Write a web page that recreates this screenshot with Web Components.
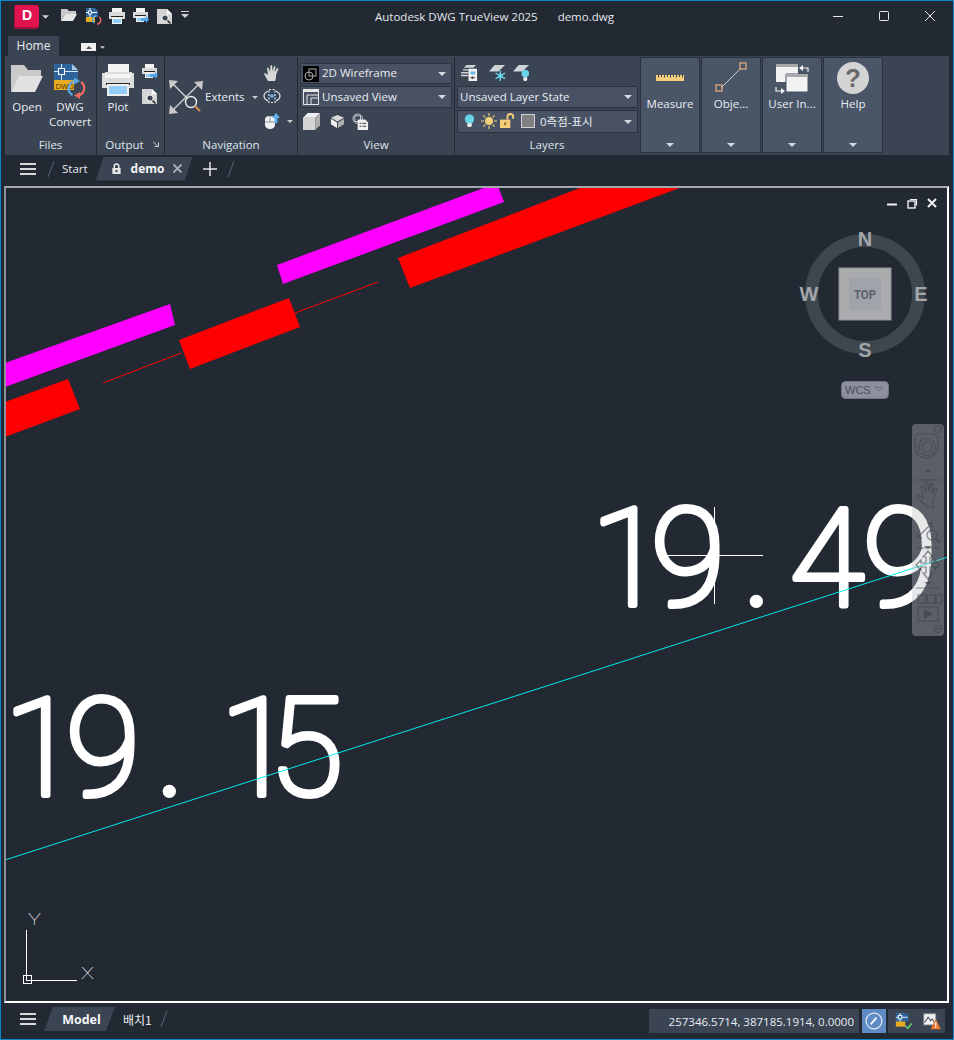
<!DOCTYPE html>
<html lang="en"><head><meta charset="utf-8"><title>Autodesk DWG TrueView 2025</title>
<style>
html,body{margin:0;padding:0;background:#222933}
body{font-family:"Open Sans","Noto Sans CJK KR",sans-serif;font-size:11.5px;color:#e8edf2}
</style></head><body>
<app-window>
  <title-bar></title-bar>
  <ribbon-tabs></ribbon-tabs>
  <ribbon-bar></ribbon-bar>
  <doc-tabs></doc-tabs>
  <cad-viewport></cad-viewport>
  <status-bar></status-bar>
</app-window>
<script>
const FONT='"Open Sans","Noto Sans CJK KR",sans-serif';
const ICONS={
folder:[32,`<path fill="#c9c9c9" d="M0 1h13l4 5h13v6H9L0 28z"/><path fill="#e2e2e2" d="M8 12h24l-8 16H0z"/>`],
folderS:[16,`<path fill="#c9c9c9" d="M0 1h6l2 2h7v3H4L0 13z"/><path fill="#e6e6e6" d="M4 6h12l-4 7H0z"/>`],
dwg:[32,`<path fill="#2f639c" d="M0 0h18l6 6v13H0z"/><path fill="#a9c8e6" d="M18 0l6 6h-6z"/><path fill="#e9ab22" d="M0 16h20v10H0z"/><path stroke="#dbe8f4" fill="none" d="M7.500 0v16M0 7.500h24"/><rect x="4.500" y="4.500" width="6" height="6" fill="#2f639c" stroke="#fff"/><text x="1.500" y="24.500" font-family="Liberation Sans" font-size="7.500" fill="#4a3500">DWG</text><path fill="none" stroke="#5aa9e6" stroke-width="2.200" d="M18.500 31a7.500 7.500 0 0 1 3-14"/><path fill="#5aa9e6" d="M20 13.500l6 3.500-6 3.500z"/><path fill="none" stroke="#ef6b62" stroke-width="2.200" d="M27 18a7.500 7.500 0 0 1-3 13.500"/><path fill="#ef6b62" d="M26 35l-6-3.500 6-3.500z"/>`],
dwgS:[16,`<path fill="#2f639c" d="M1 0h9l3 3v6H1z"/><path fill="#e9ab22" d="M1 9h9v5H1z"/><path stroke="#fff" fill="none" d="M5 0v9M1 4.500h11"/><rect x="3.500" y="3" width="3" height="3" fill="#2f639c" stroke="#fff" stroke-width=".8"/><path fill="none" stroke="#5aa9e6" stroke-width="1.300" d="M9.500 15a3.800 3.800 0 0 1 2-7"/><path fill="none" stroke="#ef6b62" stroke-width="1.300" d="M14 9a3.800 3.800 0 0 1-2 7"/>`],
plot:[32,`<path fill="#f4f4f4" d="M6 0h21v10H6z"/><path fill="#dcdcdc" d="M0 9h3v-1h27v1h2v15H0z"/><path fill="#f4f4f4" d="M3 10h26v4H3z"/><path fill="#24292f" d="M4 19h24v2H4z"/><path fill="#eee" d="M5 20h22v12H5z"/><path fill="#93ccf6" d="M7 22h18v8H7z"/>`],
plotS:[16,`<path fill="#f2f2f2" d="M3 0h10v4H3z"/><path fill="#d9d9d9" d="M0 4h16v7H0z"/><path fill="#222" d="M2 8h12v1H2z"/><path fill="#f0f0f0" d="M3 9h10v7H3z"/><path fill="#93ccf6" d="M4 11h8v4H4z"/>`],
plotBatch:[16,`<path fill="#f2f2f2" d="M3 0h9v4H3z"/><path fill="#d9d9d9" d="M0 4h15v6H0z"/><path fill="#222" d="M2 7h11v1H2z"/><path fill="#eee" d="M3 8h8v6H3z"/><path fill="#93ccf6" d="M4 10h5v3H4z"/><path fill="#4fa6ea" d="M8 10h5V8l3 3.500-3 3.500v-2H8z"/>`],
preview:[16,`<path fill="#d3d3d3" d="M0 1h10l5 5v10H0z"/><path fill="#fff" d="M10 1l5 5h-5z"/><circle cx="8" cy="10" r="3.200" fill="#3a4250" stroke="#f2f2f2" stroke-width="1.200"/><path stroke="#222" stroke-width="1.500" d="M10.500 12.500l3 3"/>`],
extents:[34,`<g fill="none" stroke="#d6d6d6" stroke-width="1.300"><path d="M4 4l24 24M4 30L30 4"/></g><g fill="#c9c9c9"><path d="M0 0l9 1-8 8zM34 1l-1 9-8-8zM0 34l1-9 8 8z"/></g><circle cx="22" cy="22" r="5.500" fill="#3b4453" stroke="#eee" stroke-width="1.400"/><path stroke="#c98a4d" stroke-width="2.200" d="M26 26l5 5"/>`],
hand:[16,`<path fill="#d8d8d8" d="M4 16 0 9l1-1 3 2L3 3l1.500-.5L6 7l.5-6.500L8 0l.8 6.500L10 1l1.500.5L10.500 7.500 13 3l1.500.8L12 10v3l-1 3z"/>`],
orbit:[16,`<path fill="none" stroke="#dfe6ee" stroke-width="1.200" d="M4 3C2 4 0 6 0 8s2 4 4 5M12 3c2 1 4 3 4 5s-2 4-4 5"/><path fill="none" stroke="#dfe6ee" stroke-width="1.200" stroke-dasharray="2 1.500" d="M5 1.500h6v13H5z"/><path d="M6 8h4M8 6v4" stroke="#71b9f2" stroke-width="1.300"/>`],
mouse:[16,`<path fill="#f1f1f1" d="M1 6c0-2 2-3 5-3s5 1 5 3v6c0 2-2 4-5 4s-5-2-5-4z"/><path stroke="#8b94a2" d="M1 9h10M6 3v6"/><path fill="#5eb2f2" d="M12 0l4 5h-2.500v5h-3V5H8z"/>`],
wire:[16,`<rect width="16" height="16" fill="#000"/><circle cx="6" cy="10" r="4" fill="none" stroke="#aaa"/><rect x="6" y="3" width="7" height="7" fill="none" stroke="#aaa"/>`],
views:[16,`<rect x=".5" y=".5" width="15" height="15" fill="none" stroke="#e6e6e6"/><path fill="#e6e6e6" d="M1 1h14v2H1z"/><path fill="none" stroke="#e6e6e6" d="M4 15V6h11M8 15V9h7"/>`],
cube:[18,`<path fill="#d3d3d3" d="M0 5h13v13H0z"/><path fill="#efefef" d="M0 5l5-5h13l-5 5z"/><path fill="#aeaeae" d="M13 5l5-5v13l-5 5z"/>`],
cubeS:[16,`<path fill="#d8d8d8" d="M8 1l7 3-7 4-7-4z"/><path fill="#f2f2f2" d="M1 5l6.500 4v6L1 11z"/><path fill="#b0b0b0" d="M15 5L8.500 9v6l6.500-4z"/>`],
viewMgr:[18,`<circle cx="6" cy="6" r="5" fill="none" stroke="#cfd3d8"/><rect x="3" y="3" width="6" height="6" fill="none" stroke="#cfd3d8"/><path fill="#f1f1f1" d="M6 7h8l3 3v8H6z"/><path d="M8 11h2M11 11h4M8 14h2M11 14h4" stroke="#333"/>`],
layerState:[18,`<path fill="#cfd3d8" d="M6 1h10l-3 3H3zM2 5.500h9V7H2zM0 8.500h8V10H0zM0 11.500h8V13H0z"/><path fill="#f2f2f2" d="M8 5h9v13H8z"/><path fill="#5fb8ea" d="M10 8h5v3h-5z"/><path stroke="#333" d="M10 14.500h5M12 13v3"/>`],
layerFrz:[18,`<path fill="#cfd3d8" d="M6 1h11l-7 7H0z"/><g stroke="#66d4e6" stroke-width="1.400"><path d="M12 7v11M7 9.500l10 6M17 9.500l-10 6"/></g><circle cx="12" cy="12.500" r="2.500" fill="#66d4e6"/>`],
layerOff:[18,`<path fill="#cfd3d8" d="M6 1h11l-7 7H0z"/><circle cx="13" cy="10" r="4" fill="#66d4e6"/><path fill="#f2f2f2" d="M11 14h4v3l-1 1h-2l-1-1z"/>`],
bulb:[14,`<circle cx="7" cy="5.500" r="5" fill="#66d6e8"/><path fill="#eee" d="M4.500 10h5v3l-1.500 1H6l-1.500-1z"/>`],
sun:[16,`<circle cx="8" cy="8" r="4" fill="#f4cf7a"/><g stroke="#f4cf7a" stroke-width="1.200"><path d="M8 0v3M8 13v3M0 8h3M13 8h3M2.300 2.300l2 2M11.700 11.700l2 2M13.700 2.300l-2 2M4.300 11.700l-2 2"/></g>`],
lock:[16,`<path fill="#f6cd7a" d="M0 7h11v9H0z"/><path fill="none" stroke="#f6cd7a" stroke-width="2" d="M8 7V4a3 3 0 0 1 6 0v2"/><rect x="4.500" y="10" width="2" height="3" fill="#8a6a2c"/>`],
swatch:[14,`<rect x=".5" y=".5" width="13" height="13" fill="#808080" stroke="#d0d0d0"/>`],
ruler:[28,`<path fill="#f6cf7a" d="M0 10h28v6H0z"/><path stroke="#3b4453" d="M2.500 10v2.500M5.500 10v2M8.500 10v2.500M11.500 10v2M14.500 10v2.500M17.500 10v2M20.500 10v2.500M23.500 10v2M26.500 10v2.500"/>`],
obj:[32,`<path stroke="#cfd3d8" d="M6 26L26 6"/><rect x="1" y="23" width="6" height="6" fill="none" stroke="#efaf7e" stroke-width="1.200"/><rect x="25" y="1" width="6" height="6" fill="none" stroke="#efaf7e" stroke-width="1.200"/>`],
ui:[32,`<path fill="#f2f2f2" d="M0 2h22v18H0z"/><path fill="#a8a8a8" d="M0 2h22v3H0z"/><path fill="#f2f2f2" d="M10 12h22v18H10z" stroke="#4a5568"/><path fill="#a8a8a8" d="M10 12h22v3H10z"/><g fill="none" stroke="#f2f2f2" stroke-width="1.200"><path d="M25 6h7v4M0 25v4h7"/></g><path fill="#f2f2f2" d="M23 6l4-3v6zM9 29l-4-3v6z"/>`],
help:[32,`<circle cx="16" cy="16" r="16" fill="#d4d4d4"/><text x="16" y="25" text-anchor="middle" font-family="Liberation Sans" font-weight="700" font-size="26" fill="#6a6a6a">?</text>`],
lockS:[12,`<path fill="#e8e8e8" d="M1.500 5.500h9V12h-9z"/><path fill="none" stroke="#e8e8e8" stroke-width="1.600" d="M3.500 5.500V3.500a2.500 2.500 0 0 1 5 0v2"/><rect x="5" y="7.500" width="2" height="2.500" fill="#3b4453"/>`],
gauge:[24,`<circle cx="12" cy="12" r="9.500" fill="#5e8bc3" stroke="#dfe9f5" stroke-width="1.500"/><path stroke="#fff" stroke-width="2" d="M8 16l7-8"/>`],
stDwg:[20,`<path fill="#2f639c" d="M1 0h12l3 3v7H1z"/><path fill="#e9ab22" d="M1 10h11v6H1z"/><path stroke="#fff" fill="none" d="M6 0v10M1 5h14"/><rect x="4" y="3" width="4" height="4" fill="#2f639c" stroke="#fff"/><path fill="none" stroke="#5fc76a" stroke-width="2" d="M12 15l3 3 5-6"/>`],
stWarn:[20,`<rect x="1" y="1" width="14" height="13" fill="#f2f2f2" stroke="#999"/><path fill="none" stroke="#4a5568" stroke-width="1.200" d="M2 11l4-6 3 4 2-2 3 5"/><path fill="#e8752c" d="M15 7l6 12H9z"/><path stroke="#fff" stroke-width="1.500" d="M15 11v4M15 16v1.500"/>`]
};
function icon(name,size,extra=''){const [v,body]=ICONS[name];const s=size||v;return `<svg width="${s}" height="${s}" viewBox="0 0 ${v} ${v}" style="display:block;flex:none;overflow:visible;${extra}" aria-hidden="true">${body}</svg>`;}
const caret=(c='#cfd4da',w=8,h=4)=>`<svg width="${w}" height="${h}" viewBox="0 0 8 4" style="display:block;flex:none" aria-hidden="true"><path fill="${c}" d="M0 0h8L4 4z"/></svg>`;
const burger=`<svg width="16" height="12" viewBox="0 0 16 12" style="display:block;flex:none" aria-hidden="true"><path fill="#d9d9d9" d="M0 0h16v2H0zM0 5h16v2H0zM0 10h16v2H0z"/></svg>`;
const slash=`<svg width="8" height="16" viewBox="0 0 8 16" style="display:block;flex:none" aria-hidden="true"><path stroke="#5a6370" d="M7 0L1 16"/></svg>`;
class Base extends HTMLElement{
  connectedCallback(){ if(this.shadowRoot)return; this.attachShadow({mode:'open'}).innerHTML=this.render(); }
}
const def=(n,r)=>customElements.define(n,class extends Base{render(){return r.call(this)}});

def('app-window',()=>`<style>:host{display:flex;flex-direction:column;box-sizing:border-box;width:954px;height:1040px;border:1px solid #0b87cf;background:#222933;overflow:hidden;font-family:${FONT}}</style><slot></slot>`);

def('title-bar',()=>`<style>
:host{display:flex;align-items:center;height:35px;flex:none;color:#e3e7ec;font-size:11.5px}
.logo{margin-left:14px;width:24px;height:22px;margin-top:-5px;position:relative;background:#e2144f;border-radius:1px 3px 3px 1px;box-shadow:-1px 1px 0 #a80f3c,0 2px 0 #a80f3c;color:#fff;font:700 14px/20px "Liberation Sans";text-align:center}
.q{display:flex;gap:8px;margin-left:12px}
.t{margin-left:186px;white-space:nowrap}
.btn{margin-left:auto;display:flex;gap:36px;padding-right:18px}
</style>
<span class="logo">D</span><span style="margin:-4px 0 0 3px">${caret('#d0d0d0',7,4)}</span>
<div class="q" style="margin-top:-5px">${icon('folderS')}${icon('dwgS')}${icon('plotS')}${icon('plotBatch')}${icon('preview')}<svg width="8" height="10" viewBox="0 0 8 10" aria-hidden="true" style="display:block;margin:3px 0 0 0"><path fill="#d0d0d0" d="M0 0h8v1H0zM0 3h8L4 7z"/></svg></div>
<span class="t" style="margin-top:-5px">Autodesk DWG TrueView 2025<span style="margin-left:20px">demo.dwg</span></span>
<div class="btn" style="margin-top:-5px">
<svg width="10" height="10" viewBox="0 0 10 10" aria-hidden="true"><path stroke="#e6e6e6" d="M0 5.500h10"/></svg>
<svg width="10" height="10" viewBox="0 0 10 10" aria-hidden="true"><rect x=".5" y=".5" width="9" height="9" rx="1" fill="none" stroke="#e6e6e6"/></svg>
<svg width="10" height="10" viewBox="0 0 10 10" aria-hidden="true"><path stroke="#e6e6e6" d="M0 0l10 10M10 0L0 10"/></svg>
</div>`);

def('ribbon-tabs',()=>`<style>
:host{display:flex;height:20px;flex:none;padding-left:7px;align-items:stretch}
.home{width:51px;background:#3b4453;display:flex;align-items:center;justify-content:center;color:#e8edf2;font-size:12px;padding-bottom:1px;box-sizing:border-box}
.mini{margin:7px 0 0 22px;width:15px;height:8px;background:#eee;display:flex;align-items:center;justify-content:center}
.c{margin:10px 0 0 4px}
</style><div class="home">Home</div><div class="mini">${caret('#555',6,3).replace('M0 0h8L4 4z','M0 4h8L4 0z')}</div><div class="c">${caret('#ccc',5,3)}</div>`);

def('ribbon-bar',()=>`<style>
:host{display:flex;height:99px;flex:none;margin-left:4px;width:944px;background:#3b4453;box-sizing:border-box;padding-top:1px}
big-tool{margin-left:1px}
</style>
<ribbon-panel label="Files" w="92"><files-group></files-group></ribbon-panel>
<ribbon-panel label="Output" w="68" launcher><output-group></output-group></ribbon-panel>
<ribbon-panel label="Navigation" w="133"><nav-group></nav-group></ribbon-panel>
<ribbon-panel label="View" w="157"><view-group></view-group></ribbon-panel>
<ribbon-panel label="Layers" w="184" last><layers-group></layers-group></ribbon-panel>
<big-tool label="Measure" icon="ruler" size="28" top="7"></big-tool>
<big-tool label="Obje..." icon="obj" size="32" top="4"></big-tool>
<big-tool label="User In..." icon="ui" size="32" top="4"></big-tool>
<big-tool label="Help" icon="help" size="32" top="4"></big-tool>`);

customElements.define('ribbon-panel',class extends Base{render(){
const l=this.getAttribute('label'),w=this.getAttribute('w'),lc=this.hasAttribute('launcher');
return `<style>
:host{display:flex;flex-direction:column;width:${w}px;box-sizing:border-box;flex:none;height:97px;${this.hasAttribute('last')?'':'border-right:1px solid #222933;'}}
.b{flex:1;min-height:0}
.t{height:21px;box-sizing:border-box;line-height:21px;text-align:center;position:relative;color:#dfe5ec;font-size:11.5px;${lc?'padding-right:12px;':''}transform:translateY(1px)}
.a{position:absolute;right:5px;top:7px}
</style><div class="b"><slot></slot></div><div class="t">${l}${lc?`<svg class="a" width="6" height="6" viewBox="0 0 6 6" aria-hidden="true"><path fill="none" stroke="#ccc" d="M0 .5l4.500 4.500M5.500 1.500v4h-4"/></svg>`:''}</div>`}});

customElements.define('big-tool',class extends Base{render(){
const g=n=>this.getAttribute(n);
return `<style>
:host{display:flex;flex-direction:column;align-items:center;box-sizing:border-box;width:60px;height:96px;flex:none;background:#4a5568;border:1px solid #2c3340;color:#e8edf2;font-size:12px;position:relative}
.i{height:38px;box-sizing:border-box;padding-top:${g('top')}px}
.l{line-height:16px;white-space:nowrap;margin-top:0;font-size:11.5px}
.c{position:absolute;bottom:5px;left:25px}
</style><div class="i">${icon(g('icon'),+g('size'))}</div><div class="l">${g('label')}</div><div class="c">${caret('#d4d8de',8,4)}</div>`}});

def('files-group',()=>`<style>
:host{display:flex;padding:7px 0 0 6px;gap:4px;font-size:11.5px;color:#e8edf2}
.b{display:flex;flex-direction:column;align-items:center;text-align:center;line-height:15px}
.l{margin-top:3px}
</style>
<div class="b" style="width:32px">${icon('folder',32)}<div class="l">Open</div></div>
<div class="b" style="width:46px">${icon('dwg',32)}<div class="l">DWG<br>Convert</div></div>`);

def('output-group',()=>`<style>
:host{display:flex;padding:7px 0 0 5px;font-size:11.5px;color:#e8edf2}
.b{display:flex;flex-direction:column;align-items:center;line-height:15px}
.s{display:flex;flex-direction:column;gap:8px;margin-left:8px}
</style>
<div class="b">${icon('plot',32)}<div style="margin-top:3px">Plot</div></div>
<div class="s">${icon('plotBatch')}${icon('preview')}</div>`);

def('nav-group',()=>`<style>
:host{display:flex;padding:8px 0 0 4px;font-size:11.5px;color:#e8edf2}
.e{display:flex;align-items:center;margin-top:15px;height:34px;width:95px;align-self:flex-start;flex:none}
.s{display:flex;flex-direction:column}
.r{display:flex;align-items:center;gap:7px}
</style>
<div class="e">${icon('extents',34)}<span style="margin:-2px 0 0 2px">Extents</span><span style="margin-left:7px">${caret('#ccc',6,3)}</span></div>
<div class="s">${icon('hand')}<span style="height:7px"></span>${icon('orbit')}<span style="height:9px"></span><div class="r">${icon('mouse')}${caret('#ccc',6,3)}</div></div>`);

customElements.define('combo-box',class extends Base{render(){
const ic=this.getAttribute('ic'),h=this.getAttribute('h')||21;
return `<style>
:host{display:flex;align-items:center;box-sizing:border-box;height:${h}px;background:#485264;border:1px solid #2c3340;padding:0 5px 0 2px;color:#e8edf2;font-size:11.5px;letter-spacing:.02px;white-space:nowrap}
.t{flex:1;margin-left:3px;margin-top:-2px;display:flex;align-items:center;gap:4px}
</style>${ic?icon(ic,16):''}<span class="t"><slot></slot></span>${caret('#d4d8de',8,4)}`}});

def('view-group',()=>`<style>
:host{display:flex;flex-direction:column;padding:6px 2px 0 2px;gap:2px}
.r{display:flex;align-items:center;padding:3px 0 0 3px}
</style>
<combo-box ic="wire" h="21">2D Wireframe</combo-box>
<combo-box ic="views" h="22">Unsaved View</combo-box>
<div class="r">${icon('cube',17)}<span style="width:10px"></span>${icon('cubeS',15)}<span style="width:7px"></span>${icon('viewMgr',17)}</div>`);

def('layers-group',()=>`<style>
:host{display:flex;flex-direction:column;padding:7px 1px 0 2px;gap:2px}
.r{display:flex;box-sizing:border-box;padding:0 0 0 4px;height:20px}
.i{display:flex;align-items:center;gap:5px}
</style>
<div class="r">${icon('layerState',17)}<span style="width:11px"></span>${icon('layerFrz',17)}<span style="width:7px"></span>${icon('layerOff',17)}</div>
<combo-box h="22"><span style="margin-left:-3px">Unsaved Layer State</span></combo-box>
<combo-box h="23"><span class="i">${icon('bulb',13)}${icon('sun',16)}<span style="margin-left:-2px">${icon('lock',15)}</span><span style="margin-left:1px">${icon('swatch',14)}</span><span style="font-family:'Open Sans','Noto Sans CJK KR',sans-serif">0측점-표시</span></span></combo-box>`);

def('doc-tabs',()=>`<style>
:host{display:flex;align-items:center;height:31px;flex:none;font-size:11.5px;color:#e4e8ee;padding-bottom:4px;box-sizing:border-box}
.m{margin-left:19px}.s{margin-left:11px}
.st{margin-left:7px}
.tab{position:relative;margin-left:8px;width:97px;height:24px;display:flex;align-items:center;box-sizing:border-box;padding-left:15px;clip-path:polygon(8px 0,100% 0,89px 100%,0 100%);background:#3b4453}
.tab b{margin-left:9px;font-weight:700;font-size:12px;color:#f4f6f8}
.x{margin-left:8px}
.p{margin-left:10px}
</style>
<span class="m">${burger}</span><span class="s">${slash}</span><span class="st">Start</span>
<div class="tab">${icon('lockS',11)}<b>demo</b><svg class="x" width="9" height="9" viewBox="0 0 9 9" aria-hidden="true"><path stroke="#aeb4bc" stroke-width="1.800" d="M0.500 .5l8 8M8.500 .5l-8 8"/></svg></div>
<svg class="p" width="14" height="14" viewBox="0 0 14 14" aria-hidden="true"><path stroke="#e8e8e8" stroke-width="1.500" d="M0 7h14M7 0v14"/></svg>
<span style="margin-left:10px">${slash}</span>`);

def('cad-viewport',()=>{
const big=(a,y,xs)=>`<text x="${xs}" y="${y}" font-family="Roboto" font-weight="100" font-size="135" fill="#fff" stroke="#fff" stroke-width="6" stroke-linejoin="round" stroke-linecap="round">${a}</text>`;
return `<style>
:host{display:block;position:relative;height:817px;width:945px;flex:none;margin-left:3px;background:#222933;overflow:hidden}
svg.c{position:absolute;left:0;top:0}
.f{position:absolute;inset:0;box-sizing:border-box;border:2px solid #fff;border-left-color:#8d9096;border-top-color:#a4a7ab;pointer-events:none}
view-cube{position:absolute;left:791px;top:10px}
nav-wheel-bar{position:absolute;left:908px;top:238px}
</style>
<svg class="c" width="945" height="817" viewBox="4 186 945 817" aria-hidden="true">
<g fill="#f0f">
<path d="M5 363 170 304 175 325 5 387z"/><path d="M277 265 489 186 498 186 504 202 283 284z"/></g>
<g fill="#f00">
<path d="M5 402 68 379 80 409 5 437z"/><path d="M179 340 289 298 300 327 190 369z"/><path d="M398 258 585 186 685 186 410 288z"/></g>
<path stroke="#f00" d="M103 383 181 353M295 313 378 282" fill="none"/>
${big('19.49',605,'591 651 743 790 863')}
${big('19.15',795,'4 66 156 220 269')}
<path stroke="#00eaea" d="M5 860 948 557" fill="none"/>
<path stroke="#fff" d="M665 555.500H763M714.500 507V604" fill="none"/>
<path stroke="#fff" fill="none" d="M26.500 930V976M31 980.500H77"/><rect x="23.500" y="975.500" width="8" height="8" fill="none" stroke="#fff"/><rect x="26.500" y="975.500" width="5" height="5" fill="none" stroke="#fff"/>
<text x="28" y="925" font-family="Roboto" font-weight="100" font-size="17" fill="#fff" textLength="13" lengthAdjust="spacingAndGlyphs">Y</text>
<text x="81" y="979" font-family="Roboto" font-weight="100" font-size="17" fill="#fff" textLength="13" lengthAdjust="spacingAndGlyphs">X</text>
</svg>
<nav-wheel-bar></nav-wheel-bar>
<view-cube></view-cube>
<div class="f"></div>`});

def('view-cube',()=>`<style>:host{display:block;width:150px;height:205px}svg{display:block}</style>
<svg width="150" height="205" viewBox="795 196 150 205">
<path stroke="#f0f0f0" stroke-width="2" fill="none" d="M887 204.500h10"/>
<rect x="908" y="201" width="7" height="7" fill="none" stroke="#f0f0f0" stroke-width="1.400"/><path fill="none" stroke="#f0f0f0" stroke-width="1.200" d="M910 199.500h6.500v6"/>
<path stroke="#f0f0f0" stroke-width="2" fill="none" d="M928 199l8 8M936 199l-8 8"/>
<circle cx="865" cy="294" r="53.500" fill="none" stroke="#3e4650" stroke-width="13"/>
<g font-family="Liberation Sans" font-weight="700" font-size="20" fill="#a3a6a9" text-anchor="middle">
<text x="865" y="246">N</text><text x="865" y="357">S</text><text x="809" y="301">W</text><text x="921" y="301">E</text></g>
<rect x="839" y="268" width="52" height="52" fill="#a9abad" stroke="#8f9398"/>
<rect x="849" y="278" width="32" height="32" fill="#a0a3a9"/>
<text x="865" y="299" text-anchor="middle" font-family="Roboto" font-weight="700" font-size="13" fill="#5b6170" textLength="22" lengthAdjust="spacingAndGlyphs">TOP</text>
<rect x="841.500" y="381.500" width="47" height="17" rx="4" fill="#8b8f9e" stroke="#70747f"/>
<text x="845" y="394" font-family="Liberation Sans" font-size="11" fill="#4c505c">WCS</text>
<path d="M875 387h8l-4 4z" fill="none" stroke="#6c707c"/>
</svg>`);

def('nav-wheel-bar',()=>`<style>:host{display:block;width:32px;height:212px}svg{display:block}</style>
<svg width="32" height="212" viewBox="0 0 32 212" aria-hidden="true">
<rect width="32" height="212" rx="4" fill="#bec0c4" fill-opacity=".37"/>
<g fill="none" stroke="#3f4347" stroke-opacity=".6" stroke-width="1.200">
<circle cx="26" cy="5" r="3.500"/><circle cx="26" cy="205" r="3.500"/><path d="M23.500 205h5"/>
<path d="M7 10h14c4 0 5 2 5 5v8c0 6-5 11-12 11S3 29 3 23v-8c0-3 1-5 4-5z"/><circle cx="15" cy="23" r="8.500"/><circle cx="15" cy="23" r="5"/>
<path d="M4 56h24"/>
<path d="M14 82 5 73l1-2 5 3-2-11 2-1 3 7V58h2l1 10 2-9 2 1-1 10 3-6 2 1-4 11v8z"/>
<path d="M5 114 20 99M15 99h5v5M5 109v5h5"/><circle cx="20" cy="111" r="5"/><path stroke-width="2" d="M24 115l4 4"/>
<path d="M4 124h24M4 164h24M16 127l5 6h-3v6h5v-3l4 5-4 5v-3h-5v6h3l-5 6-5-6h3v-6H9v3l-5-5 5-5v3h5v-6h-3z"/>
<rect x="6" y="171" width="8" height="8"/><rect x="15" y="171" width="8" height="8"/><rect x="24" y="171" width="6" height="8"/>
<rect x="6" y="183" width="20" height="14"/></g>
<path fill="#3f4347" fill-opacity=".7" d="M12 46h8l-4 3zM12 122h8l-4 3zM12 158h8l-4 3zM12 185l9 5-9 5z"/>
</svg>`);

def('status-bar',()=>`<style>
:host{display:flex;align-items:center;height:36px;flex:none;font-size:11.5px;color:#e8edf2;box-sizing:border-box}
.left{display:flex;align-items:center;padding-bottom:4px}
.m{margin-left:19px}
.model{margin-left:8px;width:71px;height:24px;display:flex;align-items:center;justify-content:center;background:#3b4453;clip-path:polygon(9px 0,100% 0,62px 100%,0 100%);font-weight:700;color:#f4f6f8;font-size:12.500px;padding-left:4px;box-sizing:border-box}
.l{margin-left:8px;font-family:"Noto Sans CJK KR",sans-serif;font-size:12px}
.s{margin-left:8px}
.co{margin-left:auto;width:210px;height:24px;background:#3b4453;box-sizing:border-box;padding-right:5px;display:flex;align-items:center;justify-content:flex-end;white-space:nowrap}
.g{margin-left:3px;width:24px;height:24px;background:#5e8bc3;display:flex;align-items:center;justify-content:center;box-sizing:border-box}
.t{margin-left:2px;width:57px;height:24px;background:#3b4453;display:flex;align-items:center;gap:11px;padding-left:7px;box-sizing:border-box;margin-right:8px}
</style>
<div class="left"><span class="m">${burger}</span><div class="model">Model</div><span class="l">배치1</span><span class="s">${slash}</span></div>
<div class="co">257346.5714, 387185.1914, 0.0000</div>
<div class="g">${icon('gauge',20)}</div>
<div class="t">${icon('stDwg',17)}${icon('stWarn',17)}</div>`);
</script>
</body></html>
